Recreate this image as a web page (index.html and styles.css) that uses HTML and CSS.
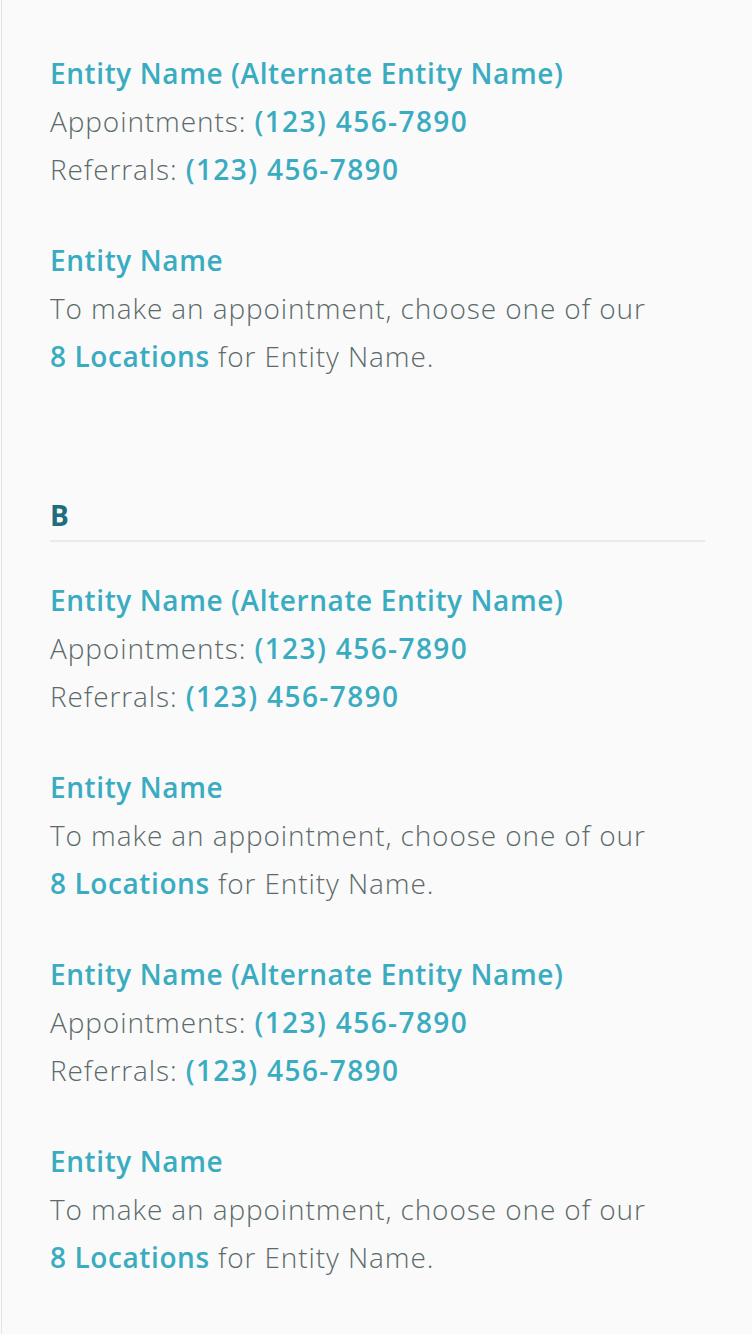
FILE: index.html
```html
<!DOCTYPE html>
<html lang="en">
<head>
<meta charset="utf-8">
<title>Entities</title>
<link rel="stylesheet" href="styles.css">
</head>
<body>
<div class="page">
  <div class="entry">
    <a class="name" href="#">Entity Name (Alternate Entity Name)</a>
    <p class="line">Appointments: <a class="phone" href="#">(123) 456-7890</a></p>
    <p class="line">Referrals: <a class="phone" href="#">(123) 456-7890</a></p>
  </div>
  <div class="entry">
    <a class="name" href="#">Entity Name</a>
    <p class="line">To make an appointment, choose one of our</p>
    <p class="line"><a href="#">8 Locations</a> for Entity Name.</p>
  </div>

  <section class="group">
    <h2 class="letter">B</h2>
    <div class="entry">
      <a class="name" href="#">Entity Name (Alternate Entity Name)</a>
      <p class="line">Appointments: <a class="phone" href="#">(123) 456-7890</a></p>
      <p class="line">Referrals: <a class="phone" href="#">(123) 456-7890</a></p>
    </div>
    <div class="entry">
      <a class="name" href="#">Entity Name</a>
      <p class="line">To make an appointment, choose one of our</p>
      <p class="line"><a href="#">8 Locations</a> for Entity Name.</p>
    </div>
    <div class="entry">
      <a class="name" href="#">Entity Name (Alternate Entity Name)</a>
      <p class="line">Appointments: <a class="phone" href="#">(123) 456-7890</a></p>
      <p class="line">Referrals: <a class="phone" href="#">(123) 456-7890</a></p>
    </div>
    <div class="entry">
      <a class="name" href="#">Entity Name</a>
      <p class="line">To make an appointment, choose one of our</p>
      <p class="line"><a href="#">8 Locations</a> for Entity Name.</p>
    </div>
  </section>
</div>
</body>
</html>
```

FILE: styles.css
```css
html, body {
  margin: 0;
  padding: 0;
  background: #fafafa;
}
body {
  font-family: "Open Sans", Lato, sans-serif;
  color: #5b6a6b;
  height: 1334px;
  overflow: hidden;
}
.page {
  margin-left: 1px;
  border-left: 1px solid #e4e4e4;
  padding: 49px 47px 0 48px;
  min-height: 1334px;
  box-sizing: border-box;
}
.entry {
  display: flex;
  flex-direction: column;
  margin-bottom: 43px;
}
.name, .line a {
  color: #3aacc1;
  font-weight: 600;
  text-decoration: none;
  letter-spacing: 0.6px;
}
.name {
  font-size: 28px;
  line-height: 48px;
}
.line {
  margin: 0;
  font-size: 28px;
  line-height: 48px;
  font-weight: 300;
  letter-spacing: 0.9px;
}
.line .phone {
  letter-spacing: 1.4px;
}
.group {
  margin-top: 120px;
}
.letter {
  margin: 0 0 34px 0;
  font-family: "Liberation Sans Narrow", "Open Sans", sans-serif;
  font-size: 28px;
  line-height: 30px;
  font-weight: 700;
  color: #1f6e7c;
  padding-bottom: 10px;
  border-bottom: 2px solid #e8ebed;
}
```
